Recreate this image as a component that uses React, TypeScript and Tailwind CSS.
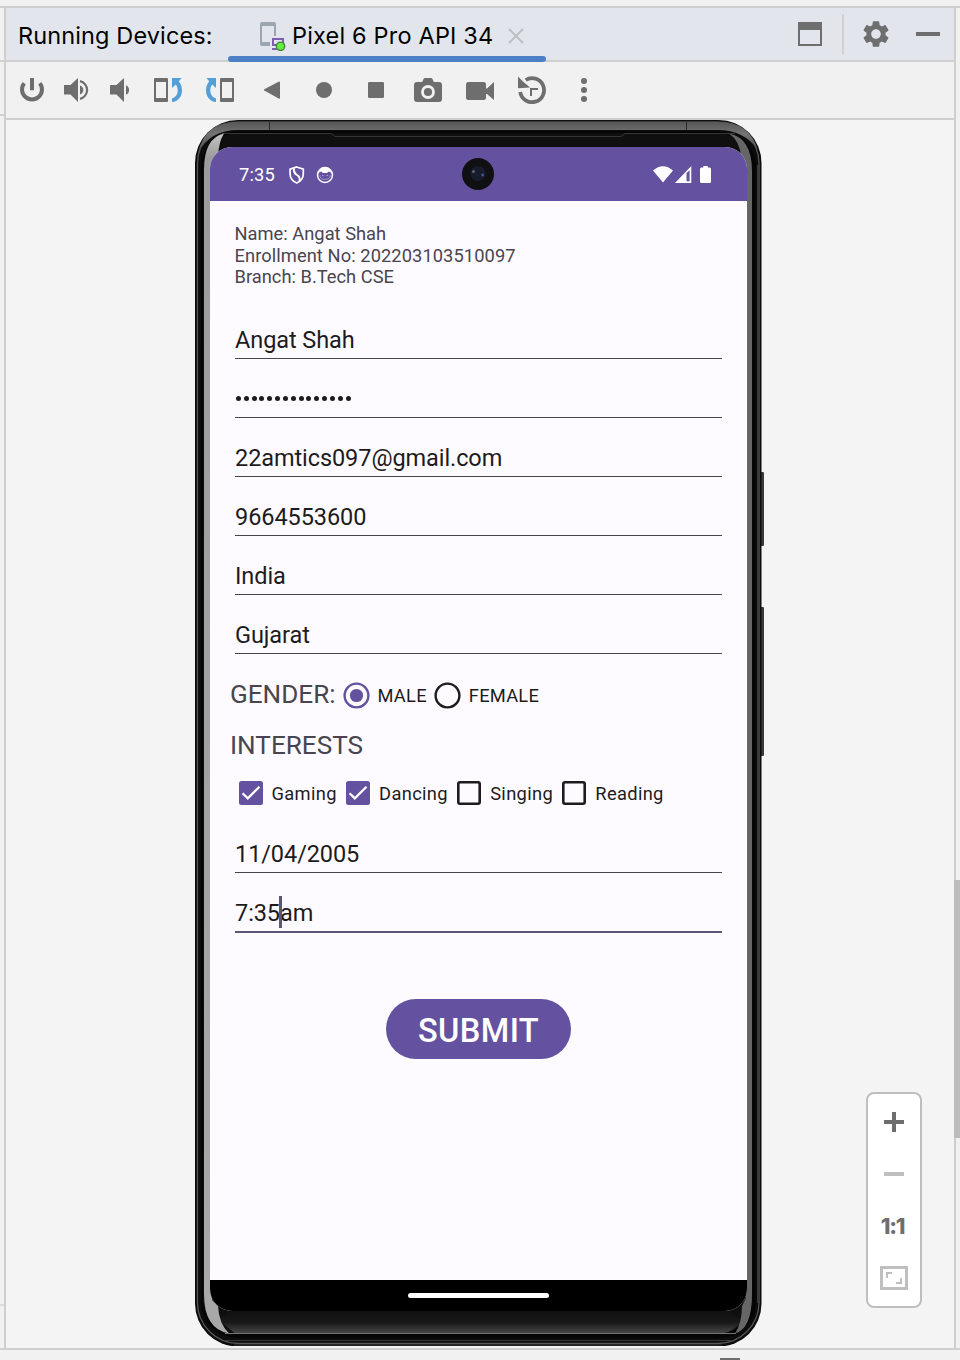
import React from "react";
import { MdSettings } from "react-icons/md";

const GREY = "#6e6e6e";

function ToolIcon({ label, children }: { label: string; children: React.ReactNode }) {
  return (
    <button aria-label={label} className="block size-8 shrink-0">
      <svg viewBox="0 0 32 32" width="32" height="32" fill={GREY}>
        {children}
      </svg>
    </button>
  );
}

function RotateGlyph() {
  return (
    <>
      <path fillRule="evenodd" d="M3 4h12a1 1 0 0 1 1 1v22a1 1 0 0 1-1 1H3a1 1 0 0 1-1-1V5a1 1 0 0 1 1-1ZM4 8v16h10V8Z" />
      <path d="M20 4H29.6L26.8 7.2C29 10 30 13 30 16.2C30 22.5 26 27.6 20 28V24.2C23.5 23.4 25.7 20.3 25.7 16.4C25.7 14 25.1 12 23.8 10.4L20 14Z" fill="#549fd7" />
    </>
  );
}

function Header() {
  return (
    <header className="flex h-[54px] shrink-0 border-b-2 border-[#cfcfcf] bg-[#e2e6ec] font-['Inter',sans-serif] text-[23.5px] text-black">
      <h1 className="w-[222px] pt-px pl-3 leading-[54px] tracking-[0.12px] whitespace-nowrap">Running Devices:</h1>
      <div className="relative flex h-[52px] w-[318px] items-center pl-[31px]">
        <svg className="mt-[3px] shrink-0" width="28" height="30" viewBox="0 0 28 30">
          <path d="M1 3a2 2 0 0 1 2-2h12a2 2 0 0 1 2 2v12h-2V5H3v16h8v4H3a2 2 0 0 1-2-2Z" fill="#9aa7b0" />
          <path fillRule="evenodd" d="M13 17h12v8h-6v2h3v2h-9v-2h4v-2h-4ZM15 19v4h8v-4Z" fill="#7d5fb0" />
          <circle cx="21.5" cy="25.3" r="4.2" fill="#62ee3c" stroke="#477f3a" strokeWidth="1.3" />
        </svg>
        <span className="mt-1 ml-[5px] leading-[50px] tracking-[0.18px] whitespace-nowrap">Pixel 6 Pro API 34</span>
        <svg className="absolute top-5 left-[280px]" width="16" height="16" viewBox="0 0 16 16" stroke="#bcc0c5" strokeWidth="2">
          <path d="M1 1l14 14M15 1L1 15" />
        </svg>
        <div className="absolute top-12 left-0 h-1.5 w-[318px] rounded-full bg-[#4d7fc6]" />
      </div>
      <div className="flex h-[52px] flex-1 items-center justify-end">
        <svg width="24" height="24" viewBox="0 0 24 24" fill={GREY}>
          <path fillRule="evenodd" d="M0 0h24v24H0ZM2 8v14h20V8Z" />
        </svg>
        <div className="ml-5 h-10 w-0.5 bg-[#cfd0d2]" />
        <MdSettings className="ml-4 size-8" color={GREY} />
        <div className="mr-3.5 ml-6 h-1 w-6 bg-[#6e6e6e]" />
      </div>
    </header>
  );
}

function Toolbar() {
  return (
    <div className="flex h-[58px] shrink-0 items-center border-b-2 border-[#cfcfcf] bg-[#f1f1f1] pl-2.5">
      <div className="flex gap-3">
        <ToolIcon label="Power">
          <path d="M14 4h4v12.3h-4Z" />
          <path d="M8.2 9.2A10 10 0 1 0 23.8 9.2" fill="none" stroke={GREY} strokeWidth="4" />
        </ToolIcon>
        <ToolIcon label="Volume up">
          <path d="M4 11h6.5L18 4v24l-7.5-7.5H4Z" />
          <path d="M20 11.5a4.7 4.7 0 0 1 0 9Z" />
          <path d="M20 7.2A9 9 0 0 1 20 24.8" fill="none" stroke={GREY} strokeWidth="2.2" />
        </ToolIcon>
        <ToolIcon label="Volume down">
          <path d="M6 11h6.5L20 4v24l-7.5-7.5H6Z" />
          <path d="M22 11.2a5.3 5.3 0 0 1 0 9.6Z" />
        </ToolIcon>
      </div>
      <div className="ml-4 flex gap-5">
        <ToolIcon label="Rotate left">
          <RotateGlyph />
        </ToolIcon>
        <ToolIcon label="Rotate right">
          <g transform="translate(32 0) scale(-1 1)">
            <RotateGlyph />
          </g>
        </ToolIcon>
        <ToolIcon label="Back">
          <path d="M8.3 16.6a.8.8 0 0 1 0-1.3L22.6 7.8q1.4-.6 1.4.7V24q0 1.2-1.4.6Z" />
        </ToolIcon>
        <ToolIcon label="Home">
          <circle cx="16" cy="16" r="8" />
        </ToolIcon>
        <ToolIcon label="Overview">
          <rect x="8" y="8" width="16" height="16" rx="1.3" />
        </ToolIcon>
        <ToolIcon label="Screenshot">
          <path d="M10 8.5l1.5-3.5q.5-1 1.5-1h6q1 0 1.5 1l1.5 3.5Z" />
          <rect x="2" y="8" width="28" height="20" rx="3" />
          <circle cx="16" cy="18" r="5.5" fill={GREY} stroke="#f1f1f1" strokeWidth="2.8" />
        </ToolIcon>
        <ToolIcon label="Record">
          <rect x="2" y="8" width="20" height="18" rx="2.5" />
          <path d="M21 14.5h2L30 8v18l-7-6h-2Z" />
        </ToolIcon>
        <ToolIcon label="Snapshots">
          <path d="M9.7 6A12 12 0 1 1 4.2 18" fill="none" stroke={GREY} strokeWidth="3.8" />
          <path d="M2 2.5L7 7.5L14 13.5L2 14.3Z" />
          <path d="M15 22V15H22" fill="none" stroke={GREY} strokeWidth="2" />
        </ToolIcon>
        <ToolIcon label="More">
          <circle cx="16" cy="7" r="3" />
          <circle cx="16" cy="16" r="3" />
          <circle cx="16" cy="25" r="3" />
        </ToolIcon>
      </div>
    </div>
  );
}

function Bezel() {
  return (
    <svg className="absolute inset-0" width="569" height="1226" viewBox="195 120 569 1226">
      <defs>
        <linearGradient id="topRim" x1="0" y1="0" x2="0" y2="1">
          <stop offset="0" stopColor="#555" />
          <stop offset=".4" stopColor="#747474" />
          <stop offset="1" stopColor="#424242" />
        </linearGradient>
        <linearGradient id="chin" x1="0" y1="0" x2="0" y2="1">
          <stop offset="0" stopColor="#101010" />
          <stop offset=".5" stopColor="#181818" />
          <stop offset="1" stopColor="#484848" />
        </linearGradient>
        <linearGradient id="shine" x1="0" y1="0" x2="0" y2="1">
          <stop offset="0" stopColor="#c4c4c4" />
          <stop offset=".02" stopColor="#9c9c9c" />
          <stop offset="1" stopColor="#a8a8a8" />
        </linearGradient>
      </defs>
      <rect x="760" y="472" width="4" height="74" rx="1" fill="#3a3a3a" />
      <rect x="760" y="607" width="4" height="149" rx="1" fill="#3a3a3a" />
      <rect x="195" y="120" width="566.5" height="1226.5" rx="43" fill="#0c0c0c" />
      <rect x="197.5" y="122.5" width="561.5" height="1221" rx="41" fill="none" stroke="#565656" strokeWidth="1.3" />
      <path d="M198 153Q205 121.5 238 121.5H718Q749 121.5 758 150Q744 130 718 130H238Q210 130 198 153Z" fill="url(#topRim)" />
      <path d="M269.5 122v8M686.5 122v8" stroke="#292929" />
      <rect x="201" y="131" width="555" height="1207" rx="37" fill="#050505" />
      <rect x="203" y="133" width="549" height="1201" rx="34" fill="#0f0f0f" />
      <path d="M222 133.5H331L335 136.5H621L625 133.5H735" fill="none" stroke="#353535" />
      <path d="M229 1311H727L742 1320Q736 1331 722 1333.5H235L219 1320Z" fill="url(#chin)" />
      <path d="M204 170Q204 138 224 133.5Q219 141 218 156L212 175V1300L218 1306Q219 1324 229 1333.5Q204 1329 204 1294Z" fill="url(#shine)" />
      <path d="M729 133.5Q752 138 752 171V1294Q752 1329 735 1333.5Q742 1323 742 1306L746 1298V170L741 157Q740 141 729 133.5Z" fill="#666" />
      <path d="M225 1333.5H736" stroke="#737373" />
      <path d="M224 1340.5H733" stroke="#363636" />
      <path d="M234 1345H722" stroke="#353535" />
      <path d="M757.5 165V1303" stroke="#363636" />
    </svg>
  );
}

function StatusBar() {
  return (
    <div className="flex h-[54px] items-center bg-[#64519f] pr-9 pl-[29px] text-white">
      <span className="mt-0.5 w-[50px] text-[18.3px] tracking-[0.2px]">7:35</span>
      <svg className="mt-px" width="16" height="18" viewBox="0 0 16 18" fill="none" stroke="#fff" strokeWidth="1.7">
        <path d="M7.7 1L14.3 3.2V8Q14.3 14 7.7 17Q1.1 14 1.1 8V3.2Z" />
        <path d="M5 2.5Q4.5 7 8 9Q11.5 11 10.5 15" strokeWidth="2" />
      </svg>
      <svg className="mt-px ml-[11px]" width="18" height="18" viewBox="0 0 18 18">
        <circle cx="9" cy="9" r="7.5" fill="none" stroke="#fff" strokeWidth="1.5" />
        <path d="M2 7Q4 1.5 9 1.5Q14 1.5 16 7L12.8 5.5L11 7H7L5.2 5.5Z" fill="#fff" />
        <path d="M4 9V11Q5 13.5 9 13.5Q13 13.5 14 11V9" fill="none" stroke="#a99dcb" strokeWidth=".8" />
        <path d="M6 9.500h1.500M10.500 9.500h1.500" stroke="#a99dcb" />
      </svg>
      <div className="ml-auto flex items-end">
        <svg width="20" height="17" viewBox="0 0 20 17">
          <path d="M0 4.500Q10-4 20 4.500L10 16.500Z" fill="#fff" />
        </svg>
        <svg className="ml-0.5" width="17" height="17" viewBox="0 0 17 17">
          <path fillRule="evenodd" d="M16.300 0V17H0ZM11.500 7V15.300H14.600V4.300Z" fill="#fff" />
        </svg>
        <svg className="ml-2" width="11" height="17" viewBox="0 0 11 17">
          <path d="M3.300 0h4.500v1.500H9.500Q11 1.500 11 3V15.500Q11 17 9.500 17H1.500Q0 17 0 15.500V3Q0 1.500 1.500 1.500H3.300Z" fill="#fff" />
        </svg>
      </div>
    </div>
  );
}

function Field({ children, focused = false }: { children: React.ReactNode; focused?: boolean }) {
  return (
    <div
      className={
        focused
          ? "flex h-[60px] items-end border-b-2 border-[#5d5870] pb-1 text-[23.5px] leading-[27px] tracking-[-0.08px] text-[#1d1b20]"
          : "flex h-[59px] items-end border-b border-[#49454f] pb-1 text-[23.5px] leading-[27px] tracking-[-0.08px] text-[#1d1b20]"
      }
    >
      {children}
    </div>
  );
}

function Radio({ label, checked = false }: { label: string; checked?: boolean }) {
  const color = checked ? "#64519f" : "#1d1b20";
  return (
    <label className="flex items-center gap-[7.5px]">
      <svg width="27" height="27" viewBox="0 0 27 27">
        <circle cx="13.5" cy="13.5" r="11.9" fill="none" stroke={color} strokeWidth="2.4" />
        {checked && <circle cx="13.5" cy="13.5" r="6.6" fill={color} />}
      </svg>
      <span className="leading-[21px] tracking-[0.25px]">{label}</span>
    </label>
  );
}

function Check({ label, checked = false }: { label: string; checked?: boolean }) {
  return (
    <label className="flex items-center gap-[9px]">
      <svg width="24" height="24" viewBox="0 0 24 24">
        {checked ? (
          <>
            <rect width="24" height="24" rx="2.5" fill="#64519f" />
            <path d="M3.6 12.2l5.2 5.2L20.5 5.7" fill="none" stroke="#fff" strokeWidth="2.3" />
          </>
        ) : (
          <rect x="1.3" y="1.3" width="21.4" height="21.4" rx="1.7" fill="none" stroke="#1d1b20" strokeWidth="2.6" />
        )}
      </svg>
      <span className="leading-[21px]">{label}</span>
    </label>
  );
}

function Screen() {
  return (
    <main className="relative flex h-[1164px] w-[537px] flex-col overflow-hidden rounded-[22px] bg-[#fdfbff] font-['Roboto',sans-serif]">
      <StatusBar />
      <svg className="absolute top-[11px] left-[252px]" width="32" height="32" viewBox="0 0 32 32">
        <circle cx="16" cy="16" r="16" fill="#101012" />
        <circle cx="16" cy="15.5" r="7.5" fill="#171b2b" />
        <circle cx="11.5" cy="13.5" r="1.5" fill="#5c6175" />
        <circle cx="20.7" cy="17" r="1.4" fill="#345e91" />
      </svg>
      <div className="flex flex-1 flex-col px-[25px] pt-[22px]">
        <div className="-ml-[0.5px] h-[77px] pt-[0.4px] text-[18.3px] leading-[21.4px] tracking-[0.02px] text-[#49454f]">
          <p>Name: Angat Shah</p>
          <p className="tracking-[0.08px]">Enrollment No: 202203103510097</p>
          <p>Branch: B.Tech CSE</p>
        </div>
        <Field>Angat Shah</Field>
        <Field>
          <span className="flex gap-[2.84px] pb-3 pl-px">
            {Array.from({ length: 15 }, (_, i) => (
              <i key={i} className="block size-[5px] rounded-full bg-[#1d1b20]" />
            ))}
          </span>
        </Field>
        <Field>22amtics097@gmail.com</Field>
        <Field>9664553600</Field>
        <Field>India</Field>
        <Field>Gujarat</Field>
        <div className="-ml-[5px] flex h-[58px] items-start pt-[25px]">
          <span className="w-[113px] text-[26.1px] leading-[30px] text-[#49454f]">GENDER:</span>
          <div className="flex gap-[7.5px] pt-[3px] text-[18.3px] text-[#1d1b20]">
            <Radio label="MALE" checked />
            <Radio label="FEMALE" />
          </div>
        </div>
        <h2 className="-ml-[5px] h-[69px] pt-[18px] text-[26.1px] leading-[30px] text-[#49454f]">INTERESTS</h2>
        <div className="ml-[3.5px] flex h-[33px] text-[18.3px] tracking-[0.34px] text-[#1d1b20]">
          <div className="flex h-6 gap-[9.3px]">
            <Check label="Gaming" checked />
            <Check label="Dancing" checked />
            <Check label="Singing" />
            <Check label="Reading" />
          </div>
        </div>
        <Field>11/04/2005</Field>
        <Field focused>
          <span className="relative">
            7:35
            <i className="absolute -top-1 -right-[2px] h-8 w-[3px] bg-[#5d5870]" />
          </span>
          am
        </Field>
        <button className="mt-[66px] h-[60px] w-[185px] self-center rounded-full bg-[#64519f] pt-[5px] text-[32.6px] leading-none font-medium tracking-[0.4px] text-white">
          SUBMIT
        </button>
      </div>
      <div className="flex h-[31px] items-center justify-center bg-black">
        <div className="h-[5px] w-[141px] rounded-full bg-white" />
      </div>
    </main>
  );
}

function ZoomPanel() {
  return (
    <div className="absolute top-[972px] left-[860px] flex h-[216px] w-14 flex-col items-center justify-between rounded-lg border-2 border-[#bfbfbf] bg-white py-3.5 font-['Inter',sans-serif]">
      <svg width="28" height="28" viewBox="0 0 28 28" stroke={GREY} strokeWidth="4">
        <path d="M4 14h20M14 4v20" />
      </svg>
      <svg width="28" height="28" viewBox="0 0 28 28" stroke="#bfbfbf" strokeWidth="4">
        <path d="M4 14h20" />
      </svg>
      <span className="-ml-[3px] h-7 text-[22px] leading-7 font-extrabold tracking-[-1.2px] text-[#6e6e6e]">1:1</span>
      <svg width="28" height="28" viewBox="0 0 28 28" fill="none" stroke="#bfbfbf">
        <rect x="1.5" y="3.5" width="25" height="21" strokeWidth="3" />
        <path d="M7 14V9h5M16 19h5v-5" strokeWidth="2" />
      </svg>
    </div>
  );
}

export default function App() {
  return (
    <div className="relative flex h-[1360px] w-[960px] flex-col overflow-hidden bg-[#f1f1f1]">
      <div className="h-2 shrink-0 border-b-2 border-[#cfcfcf]" />
      <div className="flex h-[1340px] shrink-0">
        <div className="flex w-1 flex-col">
          <div className="h-[54px] border-b-2 border-[#cfcfcf]" />
          <div className="h-[54px] border-b-2 border-[#cfcfcf]" />
          <div className="h-[1190px] border-b-2 border-[#dcdcdc]" />
        </div>
        <div className="flex w-[952px] flex-col border-x-2 border-[#cfcfcf]">
          <Header />
          <Toolbar />
          <div className="relative h-[1228px] bg-[#f4f4f4] pl-[189px]">
            <div className="relative h-[1226px] w-[569px] pt-[27px] pl-[15px]">
              <Bezel />
              <Screen />
            </div>
            <ZoomPanel />
          </div>
        </div>
      </div>
      <div className="h-3 shrink-0 border-t-2 border-[#cfcfcf] pt-2 pl-[720px]">
        <div className="h-0.5 w-5 bg-[#6e6e6e]" />
      </div>
      <div className="absolute top-[880px] left-[954px] h-[258px] w-1.5 bg-[#bcbcbc]" />
    </div>
  );
}
